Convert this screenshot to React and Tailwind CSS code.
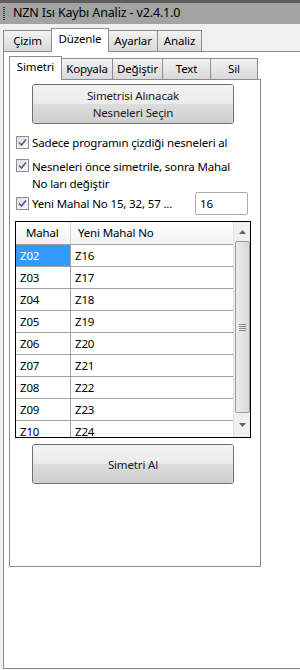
import React from "react";

const rows = [
  ["Z02", "Z16"],
  ["Z03", "Z17"],
  ["Z04", "Z18"],
  ["Z05", "Z19"],
  ["Z06", "Z20"],
  ["Z07", "Z21"],
  ["Z08", "Z22"],
  ["Z09", "Z23"],
  ["Z10", "Z24"],
];

function Check() {
  return (
    <div className="w-[13px] h-[13px] shrink-0 border border-[#8e8f8f] bg-gradient-to-br from-[#dcdcdc] to-[#fbfbfb] flex items-center justify-center">
      <svg width="9" height="9" viewBox="0 0 9 9">
        <path d="M1 4.5 L3.5 7 L8 1.5" fill="none" stroke="#4a5f97" strokeWidth="1.6" />
      </svg>
    </div>
  );
}

function Tab({ label, selected, w }) {
  if (selected) {
    return (
      <div
        className="h-[24px] bg-white border border-b-0 border-[#898c95] flex items-center justify-center relative z-10 -mb-px"
        style={{ width: w }}
      >
        <span className="-mt-[3px]">{label}</span>
      </div>
    );
  }
  return (
    <div
      className="h-[21px] border border-b-0 border-[#898c95] bg-gradient-to-b from-[#f2f2f2] to-[#d9d9d9] flex items-center justify-center"
      style={{ width: w }}
    >
      {label}
    </div>
  );
}

function WinButton({ children }) {
  return (
    <div className="w-[202px] h-[40px] rounded-[3px] border border-[#707070] flex flex-col overflow-hidden relative">
      <div className="h-1/2 bg-gradient-to-b from-[#f2f2f2] to-[#ebebeb]" />
      <div className="h-1/2 bg-gradient-to-b from-[#dddddd] to-[#cfcfcf]" />
      <div className="absolute inset-0 flex flex-col items-center justify-center leading-[17px] text-[#1a1a1a]">
        {children}
      </div>
    </div>
  );
}

export default function App() {
  return (
    <div className="w-[300px] h-[670px] bg-[#f0f0f0] overflow-hidden text-[11.5px] tracking-[-0.15px] text-black font-['Segoe_UI','Noto_Sans',sans-serif]">
      <div className="h-[3px] bg-[#5d5d5d]" />
      <div className="h-[21px] bg-[#a3a3a3] flex items-center">
        <div className="ml-[3px] w-[2px] h-[14px] flex flex-col justify-between">
          {[0, 1, 2, 3, 4, 5, 6].map((i) => (
            <div key={i} className="w-[2px] h-px bg-[#3c3c3c]" />
          ))}
        </div>
        <span className="ml-[8px] text-[12.5px]">NZN Isı Kaybı Analiz - v2.4.1.0</span>
      </div>
      <div className="pl-[3px] pt-[3px] flex items-end h-[27px]">
        <Tab label="Çizim" w={49} />
        <div className="-ml-px">
          <Tab label="Düzenle" w={58} selected />
        </div>
        <div className="-ml-px">
          <Tab label="Ayarlar" w={50} />
        </div>
        <div className="-ml-px">
          <Tab label="Analiz" w={45} />
        </div>
      </div>
      <div className="ml-[3px] w-[300px] h-[618px] bg-white border border-[#898c95] pt-[4px] pl-[5px]">
        <div className="flex items-end h-[23px]">
          <Tab label="Simetri" w={53} selected />
          <div className="-ml-px">
            <Tab label="Kopyala" w={52} />
          </div>
          <div className="-ml-px">
            <Tab label="Değiştir" w={51} />
          </div>
          <div className="-ml-px">
            <Tab label="Text" w={49} />
          </div>
          <div className="-ml-px">
            <Tab label="Sil" w={48} />
          </div>
        </div>
        <div className="w-[252px] h-[488px] border border-[#898c95] bg-white pt-[4px]">
          <div className="pl-[22px]">
            <WinButton>
              <span>Simetrisi Alınacak</span>
              <span>Nesneleri Seçin</span>
            </WinButton>
          </div>
          <div className="pl-[6px] mt-[11px] flex flex-col">
            <div className="flex items-start gap-[3px] h-[18px]">
              <div className="mt-[1px]"><Check /></div>
              <span className="leading-[15px]">Sadece programın çizdiği nesneleri al</span>
            </div>
            <div className="flex items-start gap-[3px] mt-[5px]">
              <div className="mt-[1px]"><Check /></div>
              <span className="leading-[17px]">
                Nesneleri önce simetrile, sonra Mahal
                <br />
                No ları değiştir
              </span>
            </div>
            <div className="flex items-center mt-[0px]">
              <div className="flex items-center gap-[3px]">
                <Check />
                <span>Yeni Mahal No 15, 32, 57 ...</span>
              </div>
              <div className="ml-auto mr-[12px] w-[53px] h-[23px] border border-[#abadb3] rounded-[2px] flex items-center pl-[4px]">
                16
              </div>
            </div>
          </div>
          <div className="ml-[5px] mt-[6px] w-[236px] h-[217px] border border-black flex overflow-hidden">
            <div className="w-[217px] flex flex-col">
              <div className="h-[23px] shrink-0 flex border-b border-[#a0a0a0] bg-gradient-to-b from-white to-[#f1f2f4]">
                <div className="w-[55px] border-r border-[#d5d5d5] flex items-center pl-[10px]">Mahal</div>
                <div className="flex-1 flex items-center pl-[7px]">Yeni Mahal No</div>
              </div>
              {rows.map(([a, b], i) => (
                <div key={a} className="h-[22px] shrink-0 flex border-b border-[#a0a0a0]">
                  <div
                    className={
                      "w-[55px] border-r border-[#a0a0a0] flex items-center pl-[4px] " +
                      (i === 0 ? "bg-[#3399ff] text-white" : "")
                    }
                  >
                    {a}
                  </div>
                  <div className="flex-1 flex items-center pl-[4px]">{b}</div>
                </div>
              ))}
            </div>
            <div className="w-[17px] border-l border-[#e0e0e0] bg-[#f0f0f0] flex flex-col items-center">
              <div className="h-[19px] flex items-center justify-center">
                <svg width="7" height="4" viewBox="0 0 7 4">
                  <path d="M0 4 L3.5 0 L7 4 Z" fill="#606060" />
                </svg>
              </div>
              <div className="w-[15px] h-[172px] rounded-[2px] border border-[#9a9a9a] bg-gradient-to-r from-[#ececec] to-[#d8d8d8] flex items-center justify-center">
                <div className="flex flex-col gap-[1px]">
                  <div className="w-[7px] h-px bg-[#888]" />
                  <div className="w-[7px] h-px bg-[#888]" />
                  <div className="w-[7px] h-px bg-[#888]" />
                  <div className="w-[7px] h-px bg-[#888]" />
                </div>
              </div>
              <div className="flex-1 flex items-center justify-center">
                <svg width="7" height="4" viewBox="0 0 7 4">
                  <path d="M0 0 L3.5 4 L7 0 Z" fill="#606060" />
                </svg>
              </div>
            </div>
          </div>
          <div className="pl-[22px] mt-[6px]">
            <WinButton>
              <span>Simetri Al</span>
            </WinButton>
          </div>
        </div>
      </div>
    </div>
  );
}
